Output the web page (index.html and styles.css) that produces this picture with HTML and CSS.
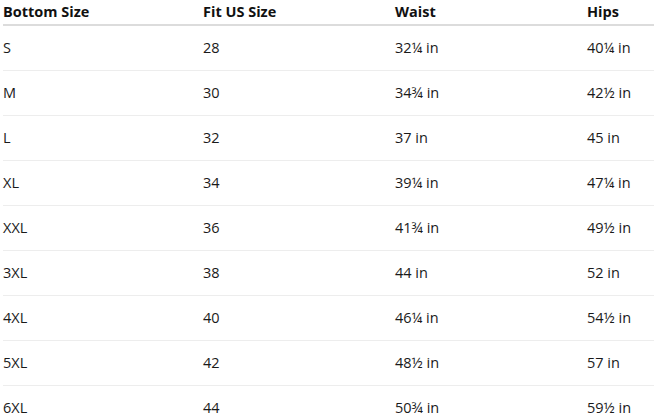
FILE: index.html
```html
<!DOCTYPE html>
<html>
<head>
<meta charset="utf-8">
<link rel="stylesheet" href="styles.css">
</head>
<body>
<table class="size-table">
  <colgroup>
    <col class="c1"><col class="c2"><col class="c3"><col class="c4">
  </colgroup>
  <thead>
    <tr><th>Bottom Size</th><th>Fit US Size</th><th>Waist</th><th>Hips</th></tr>
  </thead>
  <tbody>
    <tr><td>S</td><td>28</td><td>32¼ in</td><td>40¼ in</td></tr>
    <tr><td>M</td><td>30</td><td>34¾ in</td><td>42½ in</td></tr>
    <tr><td>L</td><td>32</td><td>37 in</td><td>45 in</td></tr>
    <tr><td>XL</td><td>34</td><td>39¼ in</td><td>47¼ in</td></tr>
    <tr><td>XXL</td><td>36</td><td>41¾ in</td><td>49½ in</td></tr>
    <tr><td>3XL</td><td>38</td><td>44 in</td><td>52 in</td></tr>
    <tr><td>4XL</td><td>40</td><td>46¼ in</td><td>54½ in</td></tr>
    <tr><td>5XL</td><td>42</td><td>48½ in</td><td>57 in</td></tr>
    <tr><td>6XL</td><td>44</td><td>50¾ in</td><td>59½ in</td></tr>
  </tbody>
</table>
</body>
</html>
```
FILE: styles.css
```css
html, body {
  margin: 0;
  padding: 0;
  background: #fff;
  overflow: hidden;
}
body {
  padding-left: 3px;
  font-family: "Open Sans", "Noto Sans", sans-serif;
  font-size: 14.5px;
  color: #1a1a1a;
}
.size-table {
  border-collapse: collapse;
  table-layout: fixed;
  width: 660px;
}
.c1 { width: 200px; }
.c2 { width: 192px; }
.c3 { width: 192px; }
.c4 { width: 76px; }
.size-table th {
  text-align: left;
  font-weight: 700;
  color: #111;
  height: 25px;
  padding: 0 0 1px 0;
  box-sizing: border-box;
  vertical-align: middle;
  border-bottom: 2px solid #dcdcdc;
  line-height: 18px;
}
.size-table td {
  height: 45px;
  padding: 0;
  box-sizing: border-box;
  vertical-align: middle;
  border-bottom: 1px solid #ededed;
  line-height: 20px;
}
```
